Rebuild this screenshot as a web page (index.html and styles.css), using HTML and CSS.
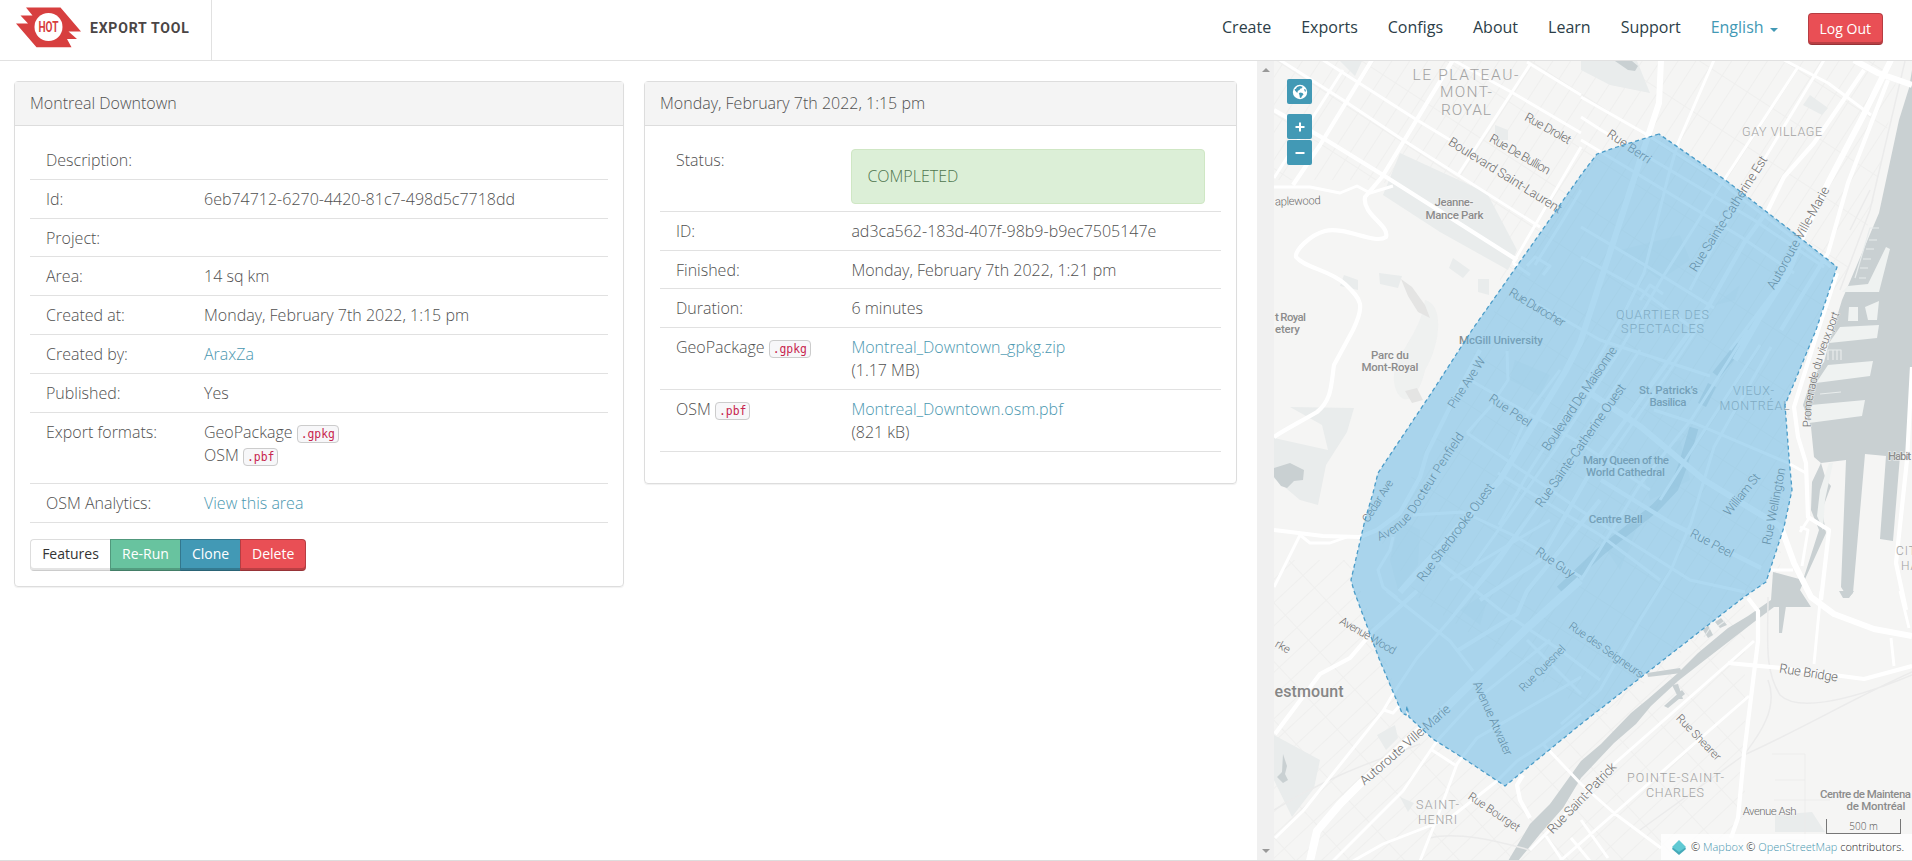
FILE: index.html
```html
<!DOCTYPE html>
<html lang="en">
<head>
<meta charset="utf-8">
<title>Export Tool</title>
<link rel="stylesheet" href="styles.css">
</head>
<body>
<header class="topbar">
  <a class="brand">
    <svg class="brand-logo" width="66" height="41" viewBox="16 7.5 66 41">
      <path fill="#d73f3f" d="M26 8H60.5L81 32H68.500L77 39.500H67L71.500 47.700H36.500L16 24H28L20.500 16H32.500Z"/>
      <circle cx="48.500" cy="27.500" r="14" fill="#fff"/>
      <text class="logo-text" x="48.500" y="32.800" text-anchor="middle" textLength="20" lengthAdjust="spacingAndGlyphs">HOT</text>
    </svg>
    <span class="brand-name">EXPORT TOOL</span>
  </a>
  <nav class="menu">
    <a>Create</a><a>Exports</a><a>Configs</a><a>About</a><a>Learn</a><a>Support</a>
    <a class="lang">English<i class="caret"></i></a>
    <button class="btn btn-danger logout">Log Out</button>
  </nav>
</header>
<main class="content">
  <section class="scroller">
    <div class="panel job">
      <h2 class="panel-head">Montreal Downtown</h2>
      <div class="panel-body">
        <dl class="table">
          <div class="row"><dt>Description:</dt><dd></dd></div>
          <div class="row"><dt>Id:</dt><dd>6eb74712-6270-4420-81c7-498d5c7718dd</dd></div>
          <div class="row"><dt>Project:</dt><dd></dd></div>
          <div class="row"><dt>Area:</dt><dd>14 sq km</dd></div>
          <div class="row"><dt>Created at:</dt><dd>Monday, February 7th 2022, 1:15 pm</dd></div>
          <div class="row"><dt>Created by:</dt><dd><a class="link">AraxZa</a></dd></div>
          <div class="row"><dt>Published:</dt><dd>Yes</dd></div>
          <div class="row formats"><dt>Export formats:</dt><dd>GeoPackage <code>.gpkg</code><br>OSM <code>.pbf</code></dd></div>
          <div class="row"><dt>OSM Analytics:</dt><dd><a class="link">View this area</a></dd></div>
        </dl>
        <div class="btn-group">
          <button class="btn btn-default">Features</button><button class="btn btn-success">Re-Run</button><button class="btn btn-primary">Clone</button><button class="btn btn-danger">Delete</button>
        </div>
      </div>
    </div>
    <div class="panel run">
      <h2 class="panel-head">Monday, February 7th 2022, 1:15 pm</h2>
      <div class="panel-body">
        <dl class="table">
          <div class="row status"><dt>Status:</dt><dd><div class="alert">COMPLETED</div></dd></div>
          <div class="row"><dt>ID:</dt><dd>ad3ca562-183d-407f-98b9-b9ec7505147e</dd></div>
          <div class="row"><dt>Finished:</dt><dd>Monday, February 7th 2022, 1:21 pm</dd></div>
          <div class="row"><dt>Duration:</dt><dd>6 minutes</dd></div>
          <div class="row"><dt>GeoPackage <code>.gpkg</code></dt><dd><a class="link">Montreal_Downtown_gpkg.zip</a><br>(1.17 MB)</dd></div>
          <div class="row"><dt>OSM <code>.pbf</code></dt><dd><a class="link">Montreal_Downtown.osm.pbf</a><br>(821 kB)</dd></div>
        </dl>
      </div>
    </div>
  </section>
  <div class="scrollbar"><i class="arrow up"></i><i class="arrow down"></i></div>
  <section class="map">
    <svg class="map-canvas" width="638" height="799" viewBox="1274 61 638 799">
      <defs>
        <pattern id="blocks" width="46" height="15" patternUnits="userSpaceOnUse" patternTransform="rotate(-57)">
          <path class="tiny" d="M0 .5H46M.5 0V15"/>
        </pattern>
        <pattern id="blocks-south" width="40" height="17" patternUnits="userSpaceOnUse" patternTransform="rotate(-43)">
          <path class="tiny" d="M0 .5H40M.5 0V17"/>
        </pattern>
        <path id="penfield" d="M1379 541C1397 534 1408 524 1417 510C1428 492 1444 466 1466 434"/>
        <path id="promenade" d="M1811 427C1810 405 1816 370 1841 310"/>
      </defs>
      <rect x="1274" y="61" width="638" height="799" fill="#f5f5f4"/>
      <path fill="url(#blocks)" d="M1274 61H1900L1870 220L1790 400L1780 570L1600 720L1420 600L1380 540L1500 300L1500 260L1380 180H1274Z"/>
      <path fill="url(#blocks-south)" d="M1274 560L1350 560L1405 715L1505 786L1745 597V860H1274Z"/>
      <g class="green">
        <path d="M1400 153L1487 193L1517 250L1508 270L1440 232L1383 195ZM1581 61H1637L1650 93L1610 85L1581 70ZM1340 61H1362L1355 76Z"/>
        <path d="M1290 407L1354 408L1347 432L1326 465L1318 505L1300 500L1274 478V438L1328 450L1322 425ZM1274 735L1320 760L1314 788L1292 817L1274 780Z"/>
        <path d="M1344 275L1358 280V290L1340 286ZM1379 273L1402 276L1398 288L1380 284ZM1453 258L1470 270L1463 278L1449 268ZM1478 279L1489 279V295L1478 292ZM1495 125L1508 130V140H1495ZM1810 95L1828 108L1822 115L1803 105ZM1377 735L1395 725L1398 738L1386 750ZM1775 815L1812 812L1825 832H1775ZM1400 797L1414 803L1408 812Z"/>
        <path class="faint" d="M1425 300C1445 305 1440 345 1425 370C1420 395 1405 410 1396 390C1385 360 1420 340 1425 300ZM1515 360L1550 375L1540 395L1510 380ZM1400 520L1420 530L1418 565L1398 590L1390 560ZM1715 305L1740 285L1735 300ZM1620 250L1680 235L1690 260L1660 280ZM1600 540L1640 520L1620 570ZM1640 460L1680 440L1690 480L1650 500ZM1460 610L1490 590L1480 625Z"/>
      </g>
      <path class="hill" d="M1401 279L1412 287L1425 305L1430 318L1418 312L1408 296ZM1405 391L1417 388L1423 400L1412 403Z"/>
      <g class="water">
        <path d="M1912 70L1909 88L1899 120L1879 213L1848 286L1842 300L1829 343L1824 362L1811 380L1803 405L1811 427L1814 457L1821 463L1846 460L1841 587L1848 598L1853 593L1865 454L1886 456L1880 539L1893 541L1900 456L1906 453L1911 367H1912Z"/>
        <path d="M1821 463L1812 482L1811 510L1819 530L1803 580L1773 572L1771 600L1748 616L1728 628L1698 653L1678 673L1648 699L1631 713L1601 744L1581 761L1550 804L1530 824L1508 861H1518L1540 834L1563 808L1581 778L1614 743L1636 724L1651 706L1678 681L1701 663L1754 622L1774 607H1811L1800 590L1826 533L1822 510L1831 486L1826 480Z"/>
        <path d="M1274 468L1290 463L1304 470L1303 480L1294 481L1287 488L1281 486L1274 477ZM1615 61H1632L1638 66L1635 71L1628 70Z"/>
        <path d="M1648 677L1647 673L1680 668L1682 673ZM1664 706L1682 690L1685 694L1668 708ZM1672 685L1678 684L1683 699L1679 699ZM1779 606H1786L1782 633H1779ZM1839 591H1854L1849 598H1843ZM1703 630L1708 625L1713 635L1708 638ZM1715 622L1721 618L1727 625L1720 628ZM1283 754L1287 766L1285 774L1288 780L1283 783L1277 777L1282 772Z"/>
      </g>
      <g class="pier">
        <path d="M1886 247L1890 249L1879 292H1842L1848 286L1868 284ZM1849 307H1858V321H1848ZM1865 307L1879 301L1877 320H1868ZM1840 327L1879 325L1877 338L1829 343ZM1828 365L1873 361L1870 376L1816 383ZM1811 405L1865 400L1862 416L1809 423Z"/>
        <path d="M1817 516L1820 490L1829 463H1833L1825 500L1823 530Z"/>
        <path class="docks" d="M1855 278L1870 228L1879 228M1859 278H1866M1860 268H1868M1863 259H1871M1866 249H1874M1869 240H1877M1828 360V350H1841V360M1833 350V360M1837 350V360M1820 394L1841 392M1704 637L1710 628M1718 626L1725 621"/>
      </g>
      <g class="rail">
        <path d="M1768 597C1768 640 1764 670 1780 695C1795 710 1840 705 1912 675M1768 680C1780 710 1755 740 1744 755L1640 830M1744 755C1800 730 1850 700 1912 672M1905 61L1870 210L1840 290"/>
        <path d="M1274 810C1340 770 1380 760 1420 744M1430 838C1460 830 1510 845 1530 850M1850 230L1870 190"/>
        <path class="thin" d="M1772 754H1805V840H1770M1775 780H1805M1774 800H1830"/>
      </g>
      <path class="tunnel" d="M1740 345L1716 375"/>
      <path class="tunnel" d="M1712 385L1702 405"/>
      <path class="tunnel" d="M1694 428L1683 465L1674 488L1655 508L1600 552L1560 590"/>
      <g class="streets">
        <path d="M1343 70L1274 178M1531 63L1458 175M1581 147L1513 263M1280 60L1343 100L1403 140L1540 227M1323 60L1417 120L1450 140M1453 60L1513 93L1581 133M1527 62L1581 95M1274 187H1310L1340 193L1357 186L1370 193L1393 186"/>
        <path d="M1714 60L1678 143L1668 177L1644 273L1624 313L1581 390L1530 470L1499 525M1798 67L1724 180L1661 280L1620 350L1555 450L1470 570M1824 60L1768 153L1730 215L1690 290M1784 60L1828 83L1871 115M1581 97L1644 133L1714 177L1831 267M1581 117L1601 130L1648 157L1754 220L1824 267M1581 140L1631 170L1741 237L1794 273M1581 227L1648 267L1714 308M1581 257L1641 290L1691 327M1530 300L1600 340L1710 376M1513 263L1530 275"/>
        <path d="M1654 410L1694 423L1788 463L1806 473M1748 330L1691 420L1641 483L1581 580M1771 347L1714 447L1691 523L1671 570L1640 620L1600 690L1561 724M1413 515L1463 512L1517 537L1581 577M1470 380L1580 443L1650 490M1467 433L1580 510L1690 580L1745 592M1507 351L1508 380L1490 407L1467 433M1393 537L1390 550L1378 570L1383 587L1397 598M1498 473L1600 535L1660 580M1437 560L1500 610L1560 650L1600 680M1300 535L1310 543H1330L1347 537M1300 535L1274 587"/>
        <path d="M1275 838L1303 811L1383 711L1393 694L1417 658L1450 620L1500 560L1555 480M1333 861L1403 791L1437 741L1470 705L1550 640M1420 861L1437 818L1457 764L1477 738L1581 677M1353 861L1383 844L1450 818L1497 781L1517 761L1543 744L1581 714M1543 744L1581 784L1614 813L1661 848M1387 591L1450 641L1473 671M1432 750L1455 765M1384 710L1393 713L1400 705M1527 640L1581 694M1754 641L1614 764L1530 850M1749 696L1648 784L1560 861M1821 591L1814 664M1900 591L1909 628M1891 638L1894 666M1581 820L1608 858M1546 836L1562 860M1571 838L1590 861M1771 570H1793M1800 532L1810 517M1802 566L1808 530L1800 527"/>
        <path d="M1708 312L1670 370L1600 470M1760 345L1700 437L1660 500M1560 370L1530 410L1510 455M1640 350L1600 410L1550 490L1450 620M1450 580L1550 520M1790 270L1730 350M1535 265L1560 225L1581 190M1527 266L1535 257L1550 266L1543 275M1640 300L1650 285L1663 294"/>
      </g>
      <g class="avenues">
        <path d="M1372 60L1320 145L1293 185M1453 60L1382 177L1365 197C1362 215 1390 225 1386 237C1375 245 1345 226 1325 231C1310 235 1295 250 1296 257C1305 268 1330 270 1345 284C1362 300 1365 305 1353 330L1334 365C1331 385 1332 400 1317 412C1300 422 1284 430 1274 437"/>
        <path d="M1274 110L1323 138L1383 175L1517 260M1864 70L1814 143L1784 177L1768 210L1744 243L1708 307L1640 400L1600 455L1540 560L1480 600M1888 80L1848 183L1828 253L1801 297L1781 330M1837 273L1818 330L1794 407L1798 437L1806 463L1808 517L1829 530L1821 600M1480 350L1450 407L1427 453L1420 477L1400 513L1377 530L1360 537L1323 536L1274 530M1275 734L1320 674L1350 658L1373 631L1417 591M1601 480L1671 523L1761 568M1457 651L1517 614L1527 591L1600 500M1523 775L1517 785L1520 800L1530 818M1748 598L1758 611V641L1744 754L1738 818L1731 838M1728 663L1781 668L1864 679L1912 666M1912 367L1907 460L1896 563L1906 610"/>
      </g>
      <g class="highways">
        <path d="M1661 60L1659 103L1649 133L1614 240L1580 343L1565 372L1530 430L1500 480L1400 592M1854 60L1878 73L1912 85M1581 387L1641 427L1704 480L1781 527L1794 563L1811 597L1834 614L1874 629L1912 636M1891 60L1861 120L1828 183L1804 233L1788 273L1758 320L1735 360"/>
        <path class="wide" d="M1310 861L1317 831L1340 804L1360 784L1450 704L1527 628L1580 580"/>
      </g>
      <g class="label road">
        <text transform="translate(1546 132) rotate(29)" textLength="51">Rue Drolet</text>
        <text transform="translate(1518 158) rotate(30)" textLength="68">Rue De Bullion</text>
        <text class="major" transform="translate(1503 179) rotate(32)" textLength="131">Boulevard Saint-Laurent</text>
        <text class="small right" transform="translate(1321 204) rotate(-2)" textLength="46">aplewood</text>
        <text transform="translate(1535 311) rotate(31)" textLength="63">Rue Durocher</text>
        <text transform="translate(1627 150) rotate(34)" textLength="50">Rue Berri</text>
        <text class="major" transform="translate(1732 216) rotate(-57.700)" textLength="134">Rue Sainte-Catherine Est</text>
        <text class="major" transform="translate(1802 240) rotate(-61)" textLength="115">Autoroute Ville-Marie</text>
        <text transform="translate(1470 385) rotate(-57)" textLength="58">Pine Ave W</text>
        <text transform="translate(1508 414) rotate(34)" textLength="48">Rue Peel</text>
        <text class="small" transform="translate(1381 503) rotate(-58)" textLength="48">Cedar Ave</text>
        <text class="major" transform="translate(1459 535) rotate(-53)" textLength="119">Rue Sherbrooke Ouest</text>
        <text class="major" transform="translate(1583 401) rotate(-55.800)" textLength="123">Boulevard De Maisonne</text>
        <text class="major" transform="translate(1584 448) rotate(-55)" textLength="147">Rue Sainte-Catherine Ouest</text>
        <text transform="translate(1553 566) rotate(34)" textLength="44">Rue Guy</text>
        <text transform="translate(1745 497) rotate(-51)" textLength="50">William St</text>
        <text transform="translate(1778 507) rotate(-79)" textLength="78">Rue Wellington</text>
        <text transform="translate(1710 547) rotate(28)" textLength="47">Rue Peel</text>
        <text class="small" transform="translate(1281 650) rotate(30)">rke</text>
        <text class="small" transform="translate(1366 639) rotate(30)" textLength="63">Avenue Wood</text>
        <text class="major" transform="translate(1408 748) rotate(-41)" textLength="115">Autoroute Ville-Marie</text>
        <text class="small" transform="translate(1545 671) rotate(-45)" textLength="60">Rue Quesnel</text>
        <text transform="translate(1489 720) rotate(66)" textLength="80">Avenue Atwater</text>
        <text class="small" transform="translate(1492 815) rotate(34)" textLength="60">Rue Bourget</text>
        <text class="major" transform="translate(1585 801) rotate(-46)" textLength="93">Rue Saint-Patrick</text>
        <text class="small" transform="translate(1604 653) rotate(35)" textLength="88">Rue des Seigneurs</text>
        <text class="major" transform="translate(1808 677) rotate(9)" textLength="59">Rue Bridge</text>
        <text class="small" transform="translate(1696 740) rotate(46)" textLength="59">Rue Shearer</text>
        <text class="small" x="1769.700" y="815" textLength="54">Avenue Ash</text>
        <text class="flow"><textPath href="#penfield" textLength="138">Avenue Docteur Penfield</textPath></text>
        <text class="flow small"><textPath href="#promenade" textLength="118">Promenade du vieux port</textPath></text>
      </g>
      <g class="label place">
        <text x="1454" y="206" textLength="39">Jeanne-</text><text x="1454.500" y="218.500" textLength="58">Mance Park</text>
        <text x="1306" y="321" class="right" textLength="31">t Royal</text><text x="1300" y="333" class="right" textLength="25">etery</text>
        <text x="1501" y="343.500" textLength="84">McGill University</text>
        <text x="1390" y="358.500" textLength="38">Parc du</text><text x="1390" y="371" textLength="57">Mont-Royal</text>
        <text x="1668.500" y="393.500" textLength="59">St. Patrick’s</text><text x="1668" y="405.500" textLength="37">Basilica</text>
        <text x="1626" y="464" textLength="86">Mary Queen of the</text><text x="1625.500" y="476" textLength="79">World Cathedral</text>
        <text x="1615.700" y="523" textLength="54">Centre Bell</text>
        <text x="1888" y="460" class="left" textLength="23">Habit</text>
        <text x="1820" y="797.500" class="left" textLength="91">Centre de Maintena</text><text x="1876" y="810" textLength="59">de Montréal</text>
      </g>
      <g class="label district">
        <text x="1616" y="318.500" class="left" textLength="93">QUARTIER DES</text><text x="1621" y="333" class="left" textLength="83">SPECTACLES</text>
        <text x="1742" y="136" class="left" textLength="80">GAY VILLAGE</text>
        <text x="1733" y="395" class="left" textLength="41">VIEUX-</text><text x="1719.500" y="410" class="left" textLength="70">MONTRÉAL</text>
        <text x="1896" y="555" class="left spaced">CIT</text><text x="1901" y="570" class="left spaced">HA</text>
        <text x="1416" y="809" class="left" textLength="43">SAINT-</text><text x="1418" y="823.500" class="left" textLength="39">HENRI</text>
        <text x="1627" y="782" class="left" textLength="97">POINTE-SAINT-</text><text x="1646" y="797" class="left" textLength="58">CHARLES</text>
        <g class="big"><text x="1412.500" y="79.500" class="left" textLength="106">LE PLATEAU-</text><text x="1440" y="97" class="left" textLength="52">MONT-</text><text x="1441" y="114.500" class="left" textLength="50">ROYAL</text></g>
      </g>
      <g class="label town"><text x="1343.500" y="697" textLength="69">estmount</text></g>
      <path class="area" d="M1659 134L1617 147L1597 154L1581 175L1472 330L1432 392L1378 473L1373 493L1365 520L1351 580L1354 591L1380 661L1402 713L1406 715L1407 706L1409 717L1433 739L1463 758L1505 786L1581 724L1744 597L1766 582L1784 527L1792 490L1789 457L1785 405L1816 330L1837 267L1794 233L1728 182Z"/>
    </svg>
    <div class="controls">
      <button class="ctl globe"><svg width="16" height="16" viewBox="0 0 16 16"><circle cx="8" cy="8" r="7.200" fill="#fff"/><path fill="#4299b5" d="M8 2L10.500 2.800L10 4.200L8.500 4.500L7.500 6L5.500 7L6 8.200L4.800 8.500L3 6.500L2.600 5.200L4 4.800L5 3ZM8 8.500L10.500 9L11.500 10.500L10 12L9 14L7.800 13.500L7.500 11L6.800 9.500ZM12 5L13.500 5.500L14 7.500L12.800 7.500Z"/></svg></button>
      <button class="ctl zoom-in"><svg width="10" height="10" viewBox="0 0 10 10"><path d="M5 .5V9.500M.5 5H9.500" stroke="#fff" stroke-width="2"/></svg></button>
      <button class="ctl"><svg width="10" height="10" viewBox="0 0 10 10"><path d="M.5 5H9.500" stroke="#fff" stroke-width="2"/></svg></button>
    </div>
    <div class="scale">500 m</div>
    <div class="attribution">
      <svg width="14" height="15" viewBox="0 0 14 15"><path fill="#45a9b8" d="M7 2L13 7L14 9L7 15L0 9L1 7Z"/><path fill="#5fc9d3" d="M7 0L14 7L7 12L0 7Z"/></svg>
      <span>© <a class="link">Mapbox</a> © <a class="link">OpenStreetMap</a> contributors.</span>
    </div>
  </section>
</main>
</body>
</html>
```
FILE: styles.css
```css
* { box-sizing: border-box; }
body { margin: 0; height: 861px; overflow: hidden; background: #fff; color: #505050; font: 300 16px/22.857px "Open Sans", sans-serif; }
h2, dl, dd { margin: 0; font: inherit; }
.link { color: #4a97b0; }

/* Header */
.topbar { display: flex; justify-content: space-between; height: 61px; border-bottom: 1px solid #e1e1e1; }
.brand { display: flex; align-items: flex-start; width: 212px; padding: 7px 0 0 16px; border-right: 1px solid #e1e1e1; }
.brand-name { margin: 10px 0 0 8px; font: 700 14px/22px Roboto, sans-serif; letter-spacing: .8px; color: #4a4545; white-space: nowrap; }
.logo-text { font: 700 14px Roboto, sans-serif; fill: #d73f3f; }
.menu { display: flex; gap: 30px; padding: 16px 29px 0 0; font-weight: 400; color: #2c3e48; }
.lang { display: flex; align-items: center; gap: 6px; height: 23px; color: #4299b5; }
.caret { margin-top: 4px; border: 4px solid transparent; border-top-color: currentColor; border-bottom: 0; }
.logout { margin: -3px 0 0; border-radius: 4px; }

/* Buttons */
.btn { height: 32px; padding: 0 11px 1px; border: 1px solid rgba(0, 0, 0, .22); border-bottom-color: rgba(0, 0, 0, .35); box-shadow: inset 0 -2px 0 rgba(0, 0, 0, .2); font: 400 14px/28px "Open Sans", sans-serif; color: #fff; white-space: nowrap; }
.btn-default { color: #333; background: #fff; border-color: #ddd; border-bottom-color: #ccc; box-shadow: inset 0 -2px 0 #e4e4e4; }
.btn-success { background: #68c39f; }
.btn-primary { background: #4299b5; }
.btn-danger { background: #e94f55; }
.btn-group { display: flex; margin-top: 16px; }
.btn-group .btn:first-child { width: 80px; border-right: 0; border-radius: 4px 0 0 4px; }
.btn-group .btn:nth-child(2) { width: 70px; border-right: 0; }
.btn-group .btn:nth-child(3) { width: 60px; border-right: 0; }
.btn-group .btn:last-child { width: 66px; border-radius: 0 4px 4px 0; }

/* Panels */
.content { display: flex; height: 800px; border-bottom: 1px solid #ddd; }
.scroller { display: flex; align-items: flex-start; gap: 20px; width: 1257px; padding: 20px 0 0 14px; }
.panel { border: 1px solid #ddd; border-radius: 4px; box-shadow: 0 1px 1px rgba(0, 0, 0, .06); }
.job { width: 610px; height: 506px; }
.run { width: 593px; height: 403px; }
.panel-head { height: 44px; padding: 10px 15px; border-bottom: 1px solid #ddd; background: #f4f4f4; }
.panel-body { padding: 14.840px 15px 15px; }
.row { display: flex; padding: 8px 16px 7px; border-bottom: 1px solid #e1e1e1; min-height: 38.857px; }
.row dt { width: 158px; flex: none; }
.row dd { flex: 1; }
.formats { height: 71px; }
.run .row dt { width: 175.400px; }
.status { height: 70.860px; }
.alert { height: 55px; padding: 15px; border: 1px solid #cfe7c4; border-radius: 4px; background: #dcefd7; color: #4e754e; }
code { padding: 1px 3px; border: 1px solid #ccc; border-radius: 4px; background: #f7f7f9; color: #c7254e; font: 400 11.4px/15px "DejaVu Sans Mono", monospace; }

/* Scrollbar */
.scrollbar { display: flex; flex-direction: column; justify-content: space-between; align-items: center; width: 17px; padding: 7px 0; background: #f0f0f0; }
.arrow { border: 4px solid transparent; }
.up { border-top: 0; border-bottom-color: #999; }
.down { border-bottom: 0; border-top-color: #999; }

/* Map */
.map { position: relative; width: 638px; height: 799px; overflow: hidden; }
.map-canvas { display: block; }
.map-canvas path { stroke-linejoin: round; }
.tiny { fill: none; stroke: #efefee; }
.green { fill: #e9ecec; }
.faint { opacity: .55; }
.hill { fill: #e4e4e3; }
.water { fill: #c9d0d2; }
.pier { fill: #eff2f1; }
.docks { fill: none; stroke: #e8ecec; stroke-width: 1.2; }
.rail { fill: none; stroke: #ebebeb; stroke-width: 1.5; }
.thin { stroke-width: .8; }
.streets, .avenues, .highways { fill: none; stroke: #fff; stroke-width: 2.9; }
.avenues { stroke-width: 4.2; }
.highways { stroke-width: 6; }
.wide { stroke-width: 8; }
.tunnel { fill: none; stroke: #c5cfd4; stroke-width: 9; opacity: .6; }
.area { fill: #5db3e4; fill-opacity: .5; stroke: #4b9cc8; stroke-width: 1.3; stroke-dasharray: 4 3; }
.label { font-family: Roboto, sans-serif; text-anchor: middle; paint-order: stroke; stroke: #f6f6f5; stroke-opacity: .6; stroke-width: 1.5px; }
.road { font-size: 12.5px; fill: #6c6c6c; }
.road .small { font-size: 11.5px; }
.road .major { font-size: 13px; }
.road .flow { text-anchor: start; }
.place { font-size: 11.5px; font-weight: 500; fill: #8c8c8c; }
.district { font-size: 12.5px; fill: #a2a2a2; }
.district .big { font-size: 15.5px; }
.district .spaced { font-size: 12px; letter-spacing: 1px; }
.label .left { text-anchor: start; }
.label .right { text-anchor: end; }
.town { font-size: 16px; font-weight: 500; fill: #868686; text-anchor: end; }
.controls { position: absolute; top: 18px; left: 13px; display: grid; gap: 1px; }
.ctl { display: grid; place-items: center; width: 25px; height: 25px; padding: 0; border: 0; border-radius: 2px; background: #4299b5; }
.globe { margin-bottom: 9px; }
.scale { position: absolute; right: 11px; bottom: 26px; width: 75px; height: 15px; border: 1px solid #777; border-top: 0; font-size: 10px; line-height: 15px; text-align: center; }
.attribution { position: absolute; right: 0; bottom: 0; display: flex; align-items: center; gap: 5px; width: 251px; height: 26px; padding-left: 11px; background: rgba(255, 255, 255, .8); color: #222; font-size: 11px; white-space: nowrap; }
```
